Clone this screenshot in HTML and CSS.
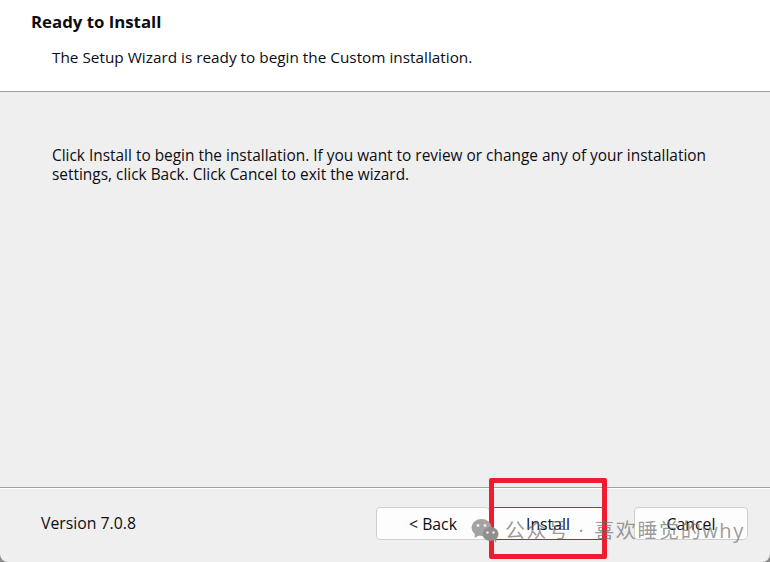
FILE: index.html
```html
<!DOCTYPE html>
<html lang="en">
<head>
  <meta charset="UTF-8">
  <title>Ready to Install</title>
  <link rel="stylesheet" href="styles.css">
</head>
<body>
  <div class="wizard">
    <div class="banner">
      <h1>Ready to Install</h1>
      <p>The Setup Wizard is ready to begin the Custom installation.</p>
    </div>

    <div class="content">
      <p>Click Install to begin the installation. If you want to review or change any of your installation settings, click Back. Click Cancel to exit the wizard.</p>
    </div>

    <div class="footer">
      <span class="version">Version 7.0.8</span>
      <div class="buttons">
        <button class="btn">&lt; Back</button>
        <button class="btn btn-default">Install</button>
        <button class="btn btn-cancel">Cancel</button>
      </div>
    </div>

    <!-- annotation on top of the screenshot -->
    <div class="highlight"></div>
    <div class="watermark">
      <svg class="wm-icon" width="28" height="25" viewBox="0 0 28 25">
        <ellipse cx="10.5" cy="9.5" rx="10" ry="8.5" fill="#a3a3a3"/>
        <path d="M4 15 L3.5 20 L9 17 Z" fill="#a3a3a3"/>
        <ellipse cx="19.5" cy="16" rx="8" ry="7" fill="#8f8f8f"/>
        <path d="M23 21 L25 25 L25.5 19 Z" fill="#8f8f8f"/>
        <circle cx="7" cy="7.5" r="1.4" fill="#efefef"/>
        <circle cx="14" cy="7.5" r="1.4" fill="#efefef"/>
        <circle cx="16.5" cy="14.5" r="1.2" fill="#efefef"/>
        <circle cx="22.5" cy="14.5" r="1.2" fill="#efefef"/>
      </svg>
      <span>公众号 · 喜欢睡觉的why</span>
    </div>
  </div>
</body>
</html>
```

FILE: styles.css
```css
* { box-sizing: border-box; }

html, body {
  margin: 0;
  height: 100%;
  background: #8c8c8c;
}

body {
  font-family: "Open Sans", "Noto Sans", sans-serif;
  font-size: 15.33px;
  color: #0c0c14;
  overflow: hidden;
}

.wizard {
  position: relative;
  width: 770px;
  height: 562px;
  display: flex;
  flex-direction: column;
  background: #efefef;
  border-radius: 0 0 8px 8px;
  overflow: hidden;
}

.banner {
  height: 92px;
  padding: 11px 31px 0;
  background: #fff;
  border-bottom: 1px solid #a0a0a0;
}

.banner h1 {
  margin: 0;
  font-size: 16.8px;
  line-height: 21px;
  font-weight: 700;
}

.banner p {
  margin: 15px 0 0 21px;
  line-height: 20px;
}

.content {
  flex: 1;
  padding: 54px 52px 0;
}

.content p {
  margin: 0;
  font-size: 15.42px;
  line-height: 19px;
}

.footer {
  height: 75px;
  padding: 19px 22px 0 41px;
  display: flex;
  justify-content: space-between;
  border-top: 1px solid #a0a0a0;
  box-shadow: inset 0 1px 0 #fff;
}

.version {
  font-size: 15.8px;
  line-height: 33px;
}

.buttons {
  display: flex;
  gap: 1px;
}

.btn {
  width: 114px;
  height: 33px;
  padding: 0;
  font: inherit;
  font-size: 15.8px;
  color: inherit;
  background: #fdfdfd;
  border: 1px solid #d0d0d0;
  border-radius: 4px;
}

.btn-default {
  border: 1px solid #0067c0;
  background: #fdfdfd;
}

.btn-cancel {
  margin-left: 28px;
}

.highlight {
  position: absolute;
  left: 489px;
  top: 478px;
  width: 118px;
  height: 81px;
  border: 5px solid #ee1c2e;
  border-radius: 2px;
}

.watermark {
  position: absolute;
  left: 471px;
  top: 518px;
  display: flex;
  align-items: center;
  gap: 6px;
  font-family: "Open Sans", "Noto Sans CJK SC", sans-serif;
  font-size: 20px;
  letter-spacing: 1.6px;
  word-spacing: 2px;
  line-height: 25px;
  color: rgba(110, 110, 110, 0.7);
  white-space: nowrap;
}

.wm-icon {
  flex: none;
}
```
